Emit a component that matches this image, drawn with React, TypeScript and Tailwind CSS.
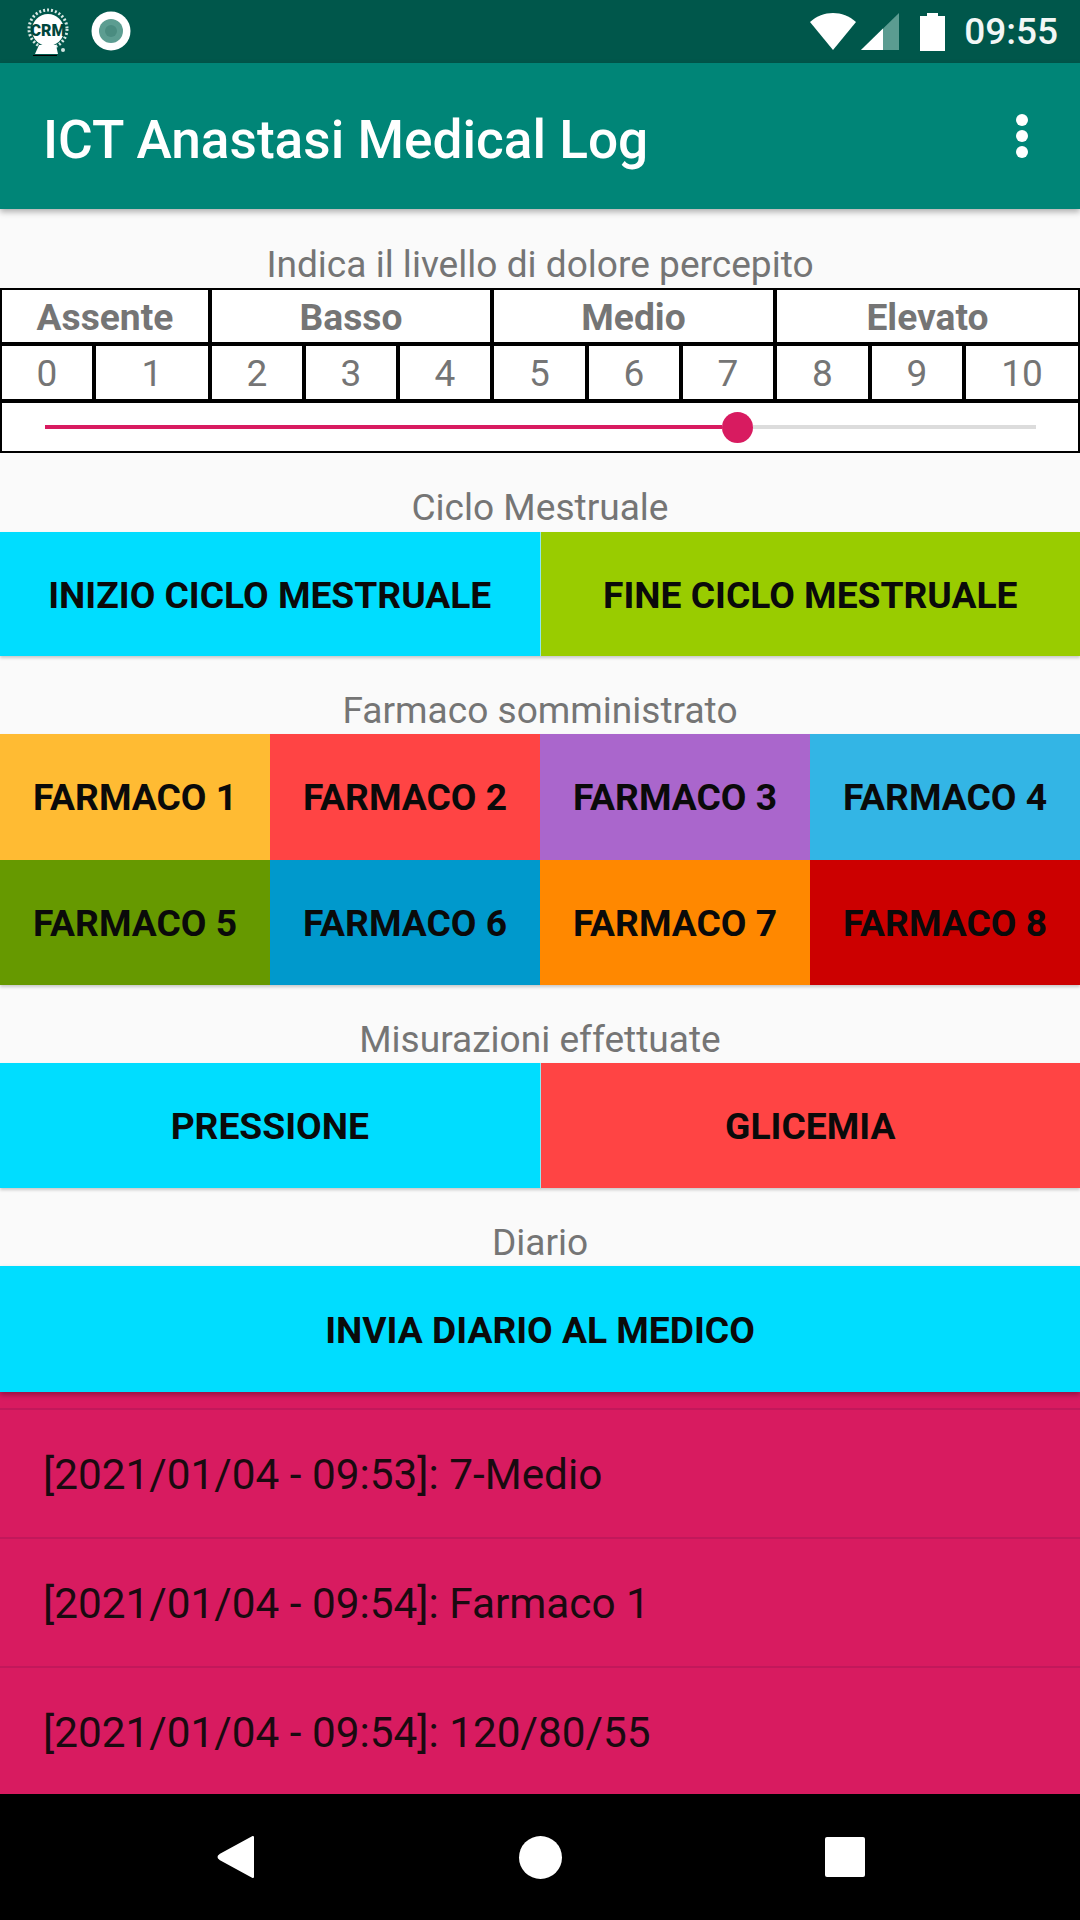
import React from 'react';

const font = { fontFamily: 'Roboto, sans-serif' };

const scale = [
  { label: 'Assente', span: 'col-span-2' },
  { label: 'Basso', span: 'col-span-3' },
  { label: 'Medio', span: 'col-span-3' },
  { label: 'Elevato', span: 'col-span-3' },
];

const levels = ['0', '1', '2', '3', '4', '5', '6', '7', '8', '9', '10'];

const logEntries = [
  '[2021/01/04 - 09:53]: 7-Medio',
  '[2021/01/04 - 09:54]: Farmaco 1',
  '[2021/01/04 - 09:54]: 120/80/55',
];

const SectionTitle = ({ children, className }: { children: React.ReactNode; className: string }) => (
  <div className={`flex items-center justify-center text-[#757575] text-[37.1px] leading-none ${className}`}>
    {children}
  </div>
);

const ActionButton = ({ label, color }: { label: string; color: string }) => (
  <div className={`flex items-center justify-center pt-[3px] font-bold text-[37.2px] text-[#0a0a0a] ${color}`}>
    {label}
  </div>
);

const CrmLogo = () => (
  <svg width="42" height="48" viewBox="0 0 42 48">
    <circle cx="21" cy="21" r="19" fill="none" stroke="#d7e8e4" strokeWidth="3" strokeDasharray="2 2" />
    <circle cx="21" cy="22" r="16" fill="#fff" />
    <text x="21" y="28" textAnchor="middle" fontSize="16" fontWeight="900" fill="#00463c" fontFamily="Roboto, sans-serif">
      CRM
    </text>
    <path d="M8 46 L12 37 H29 L31 46 Z" fill="#fff" />
    <path d="M6 47 H30 V48 H6 Z" fill="#000" />
    <circle cx="36" cy="42" r="2" fill="#cfe3df" />
  </svg>
);

const StatusBar = () => (
  <div className="flex h-[63px] items-center bg-[#00574b] pl-[27px] pr-[22px]">
    <CrmLogo />
    <svg width="40" height="40" viewBox="0 0 40 40" className="ml-[22px] mt-[-1px]">
      <circle cx="20" cy="20" r="19.5" fill="#fff" />
      <circle cx="20" cy="20" r="12" fill="#5c9d91" />
      <circle cx="20" cy="20" r="6" fill="#4a8c80" />
    </svg>
    <div className="ml-auto flex items-center">
      <svg width="46" height="37" viewBox="0 0 46 37">
        <path d="M0 9 C13 -3 33 -3 46 9 L23 37 Z" fill="#fff" />
      </svg>
      <svg width="38" height="37" viewBox="0 0 38 37" className="ml-[5px]">
        <path d="M0 37 L38 0 V37 Z" fill="#5b9c91" />
        <path d="M0 37 L22 15.5 V37 Z" fill="#fff" />
      </svg>
      <svg width="25" height="38" viewBox="0 0 25 38" className="ml-[21px]">
        <path d="M0 3 H7 V0 H18 V3 H25 V38 H0 Z" fill="#fff" />
      </svg>
      <span className="ml-[19px] text-[37px] font-medium leading-none text-[#f2f7f6]">09:55</span>
    </div>
  </div>
);

const Toolbar = () => (
  <div className="relative z-10 flex h-[146px] items-center bg-[#008577] pl-[43px] pr-[52px] shadow-[0_3px_6px_rgba(0,0,0,0.3)]">
    <span className="pt-[9px] text-[53.2px] font-medium leading-none text-white">ICT Anastasi Medical Log</span>
    <div className="ml-auto flex flex-col gap-[4px]">
      <div className="h-[12px] w-[12px] rounded-full bg-white" />
      <div className="h-[12px] w-[12px] rounded-full bg-white" />
      <div className="h-[12px] w-[12px] rounded-full bg-white" />
    </div>
  </div>
);

const PainScale = () => (
  <div className="grid h-[165px] grid-cols-[90px_112px_90px_90px_90px_91px_90px_90px_91px_90px_112px] grid-rows-[52px_53px_48px] gap-[4px] bg-black p-[2px]">
    {scale.map((s) => (
      <div key={s.label} className={`flex items-center justify-center pt-[3px] bg-white text-[37.2px] font-bold text-[#757575] ${s.span}`}>
        {s.label}
      </div>
    ))}
    {levels.map((l) => (
      <div key={l} className="flex items-center justify-center pt-[2px] bg-white text-[37px] text-[#757575]">
        {l}
      </div>
    ))}
    <div className="col-span-11 flex items-center bg-white pl-[43px] pr-[42px]">
      <div className="h-[4px] w-[677px] bg-[#d81b60]" />
      <div className="h-[31px] w-[31px] shrink-0 rounded-full bg-[#d81b60]" />
      <div className="h-[4px] flex-1 bg-[#dcdcdc]" />
    </div>
  </div>
);

const NavBar = () => (
  <div className="flex h-[126px] items-center gap-[264px] bg-black pl-[217px]">
    <svg width="38" height="44" viewBox="0 0 38 44">
      <path d="M36 2 V42 L3 24 Q0 22 3 20 Z" fill="#fff" stroke="#fff" strokeWidth="2" strokeLinejoin="round" />
    </svg>
    <div className="h-[43px] w-[43px] rounded-full bg-white" />
    <div className="ml-[-1px] h-[40px] w-[40px] rounded-[2px] bg-white" />
  </div>
);

export default function App() {
  return (
    <div className="flex h-[1920px] w-[1080px] flex-col overflow-hidden bg-[#fafafa]" style={font}>
      <StatusBar />
      <Toolbar />

      <SectionTitle className="h-[79px] pt-[33px]">Indica il livello di dolore percepito</SectionTitle>
      <PainScale />

      <SectionTitle className="h-[79px] pt-[31px]">Ciclo Mestruale</SectionTitle>
      <div className="grid h-[124px] grid-cols-2 gap-[1px] bg-[#8fe8f0] shadow-[0_2px_3px_rgba(0,0,0,0.2)]">
        <ActionButton label="INIZIO CICLO MESTRUALE" color="bg-[#00ddff]" />
        <ActionButton label="FINE CICLO MESTRUALE" color="bg-[#99cc00]" />
      </div>

      <SectionTitle className="h-[78px] pt-[32px]">Farmaco somministrato</SectionTitle>
      <div className="grid h-[251px] grid-cols-4 grid-rows-2 shadow-[0_2px_3px_rgba(0,0,0,0.2)]">
        <ActionButton label="FARMACO 1" color="bg-[#ffbb33]" />
        <ActionButton label="FARMACO 2" color="bg-[#ff4444]" />
        <ActionButton label="FARMACO 3" color="bg-[#aa66cc]" />
        <ActionButton label="FARMACO 4" color="bg-[#33b5e5]" />
        <ActionButton label="FARMACO 5" color="bg-[#669900]" />
        <ActionButton label="FARMACO 6" color="bg-[#0099cc]" />
        <ActionButton label="FARMACO 7" color="bg-[#ff8800]" />
        <ActionButton label="FARMACO 8" color="bg-[#cc0000]" />
      </div>

      <SectionTitle className="h-[78px] pt-[32px]">Misurazioni effettuate</SectionTitle>
      <div className="grid h-[125px] grid-cols-2 gap-[1px] bg-[#8fe8f0] shadow-[0_2px_3px_rgba(0,0,0,0.2)]">
        <ActionButton label="PRESSIONE" color="bg-[#00ddff]" />
        <ActionButton label="GLICEMIA" color="bg-[#ff4444]" />
      </div>

      <SectionTitle className="h-[78px] pt-[32px]">Diario</SectionTitle>
      <div className="relative z-10 grid h-[126px] shadow-[0_3px_5px_rgba(0,0,0,0.3)]">
        <ActionButton label="INVIA DIARIO AL MEDICO" color="bg-[#00ddff]" />
      </div>

      <div className="flex min-h-0 flex-1 flex-col overflow-hidden bg-[#d81b60] pt-[16px]">
        {logEntries.map((entry) => (
          <div key={entry} className="flex h-[129px] shrink-0 items-center border-t-[2px] border-[#c2185b] pl-[43px] pt-[2px] text-[42.3px] text-[#1a0a10]">
            {entry}
          </div>
        ))}
      </div>

      <NavBar />
    </div>
  );
}
